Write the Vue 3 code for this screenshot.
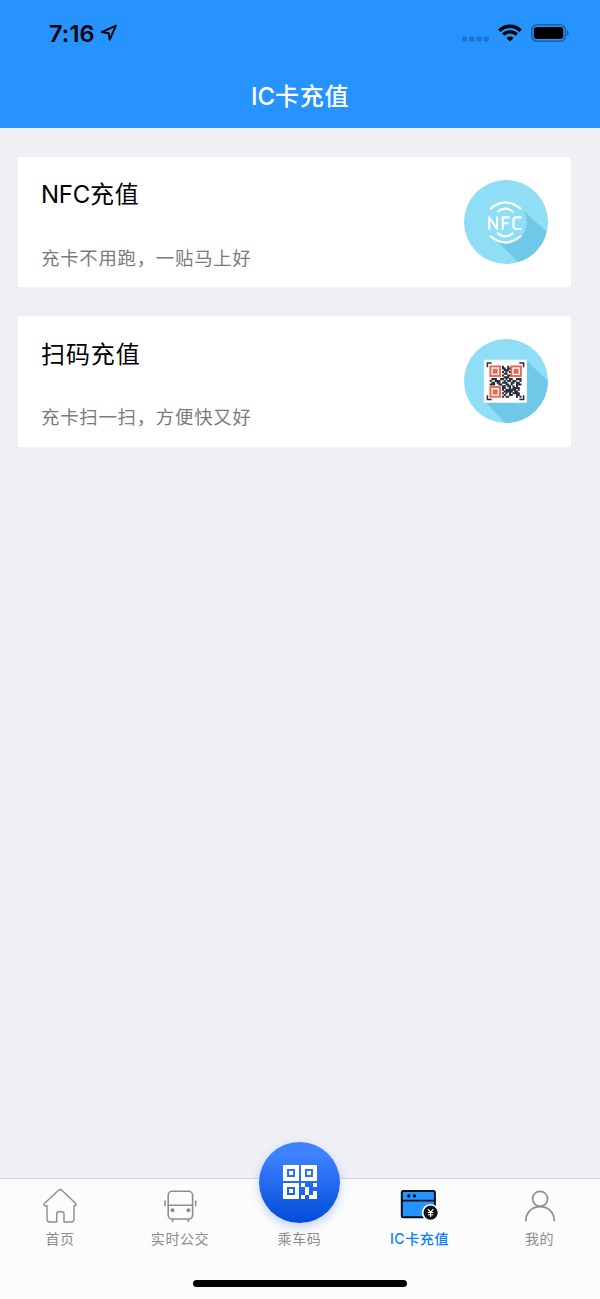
<script setup>
const cards = [
  { id: 'nfc', latin: 'NFC', title: '充值', note: '充卡不用跑，一贴马上好' },
  { id: 'scan', latin: '', title: '扫码充值', note: '充卡扫一扫，方便快又好' }
]

const tabs = [
  { id: 'home', latin: '', label: '首页' },
  { id: 'bus', latin: '', label: '实时公交' },
  { id: 'code', latin: '', label: '乘车码' },
  { id: 'card', latin: 'IC', label: '卡充值', active: true },
  { id: 'me', latin: '', label: '我的' }
]

const rows = [
  '.......#..#.......',
  '.......##.##......',
  '........###.......',
  '.......#.#.#......',
  '........##........',
  '.......#..##......',
  '........###.......',
  '.###..##.#.##..###',
  '#..###..#.##.##..#',
  '.##.##.###..##.##.',
  '###..##..##.#..###',
  '.......##.##.#.#..',
  '.......##..#.####.',
  '.......#.######.#.',
  '........#####.##..',
  '.......#.#.#.####.',
  '........#..##..##.',
  '.......#.##....#.#'
]
const modules = rows
  .flatMap((row, y) => [...row].map((c, x) => (c === '#' ? `M${x} ${y}h1.15v1.15h-1.15z` : '')))
  .join('')
</script>

<template>
  <div class="screen">
    <header class="header">
      <div class="status">
        <span class="clock">7:16</span>
        <svg class="arrow" viewBox="0 0 18 18"><path d="M1.7 8.1 15.9 1.6 9.7 15.7 8.7 9.3Z" fill="none" stroke="#000" stroke-width="1.9" stroke-linejoin="round" /></svg>
        <svg class="dots" viewBox="0 0 28 6" fill="#1c73c9"><rect x="0" y=".5" width="5.4" height="5" rx="1.8" /><rect x="7.2" y=".5" width="5.4" height="5" rx="1.8" /><rect x="14.4" y=".5" width="5.4" height="5" rx="1.8" /><rect x="21.6" y=".5" width="5.4" height="5" rx="1.8" /></svg>
        <svg class="wifi" viewBox="0 0 24 18"><g fill="none" stroke="#000" stroke-width="3.4"><path d="M1.4 6.7a15 15 0 0 1 21.2 0" /><path d="M5.3 10.6a9.5 9.5 0 0 1 13.4 0" /></g><path d="M8.4 14a5.2 5.2 0 0 1 7.2 0L12 17.6Z" /></svg>
        <svg class="battery" viewBox="0 0 38 18"><rect x=".8" y=".8" width="33.4" height="16.4" rx="4.8" fill="none" stroke="#17569a" stroke-width="1.3" /><rect x="2.8" y="2.9" width="29.4" height="12.2" rx="3" /><path d="M35.8 6v6c2.3-1.1 2.3-4.9 0-6z" fill="#17569a" /></svg>
      </div>
      <h1 class="heading"><span class="latin">IC</span>卡充值</h1>
    </header>

    <main class="cards">
      <section v-for="card in cards" :key="card.id" class="card">
        <div class="copy">
          <h2 class="title"><span v-if="card.latin" class="latin">{{ card.latin }}</span>{{ card.title }}</h2>
          <p class="note">{{ card.note }}</p>
        </div>
        <svg v-if="card.id === 'nfc'" class="badge" viewBox="0 0 84 84">
          <clipPath id="nfc-disc"><circle cx="42" cy="42" r="42" /></clipPath>
          <circle cx="42" cy="42" r="42" fill="#90def5" />
          <g clip-path="url(#nfc-disc)">
            <path d="M56.7 28 96 64.5V100H72L29.2 57.5Z" fill="#70c8e9" />
            <circle cx="41.4" cy="42.3" r="21.4" fill="#90def5" />
          </g>
          <g fill="none" stroke="#fff" stroke-width="2.1" stroke-linecap="round" stroke-linejoin="round" transform="translate(-.8 0)">
            <path d="M27.5 28.6q14.8-12.4 29.8 0M34.8 31.5q7.3-5.8 14.6 0M27.5 56.3q14.8 12.4 29.8 0M34.8 53.4q7.3 5.8 14.6 0" />
            <path d="M26 49V37.4L33.8 49V37.4M45.6 37.4h-6.1V49M39.5 43.2h5.1M57.6 37.4h-4.4q-2.9 0-2.9 2.9v5.8q0 2.9 2.9 2.9h4.4" />
          </g>
        </svg>
        <svg v-else class="badge" viewBox="0 0 84 84">
          <clipPath id="scan-disc"><circle cx="42" cy="42" r="42" /></clipPath>
          <circle cx="42" cy="42" r="42" fill="#90def5" />
          <path d="M62.4 21.5 90 48V100H56L21 62.5Z" fill="#70c8e9" clip-path="url(#scan-disc)" />
          <g transform="translate(-.7 .5)">
            <rect x="20.6" y="20.3" width="43" height="43" rx="1" fill="#fff" />
            <path d="M24.1 27.8V23.5h4.3M56 23.5h4.3v4.3M24.1 55.8v4.3h4.3M56 60.1h4.3v-4.3" fill="none" stroke="#29303d" stroke-width="1.5" />
            <path :d="modules" fill="#29303d" transform="translate(26.3 26.3) scale(1.76)" />
            <g fill="#fff" stroke="#f3624c" stroke-width="1.9">
              <rect x="27.1" y="26.9" width="9.6" height="9.6" /><rect x="48" y="26.9" width="9.6" height="9.6" /><rect x="27.1" y="47.6" width="9.6" height="9.6" />
            </g>
            <path d="M29.4 29.2h5v5h-5zM50.3 29.2h5v5h-5zM29.4 49.9h5v5h-5z" fill="#f3624c" />
          </g>
        </svg>
      </section>
    </main>

    <nav class="tabs">
      <div v-for="tab in tabs" :key="tab.id" class="tab" :class="{ active: tab.active }">
        <svg v-if="tab.id === 'home'" class="icon" viewBox="0 0 40 36" fill="none" stroke="#8e8e92" stroke-width="1.4" stroke-linejoin="round"><path d="M7 17.7H5.3C3.8 17.7 3.3 16.4 4.4 15.4L18.8 2.1q1.4-1.1 2.8 0L35.7 15.4c1 1 .6 2.3-1 2.3H34V31q0 3-3 3H24V26q0-2.2-2.2-2.2h-3Q16.7 23.8 16.7 26v8H9.8Q7 34 7 31Z" /></svg>
        <svg v-else-if="tab.id === 'bus'" class="icon" viewBox="0 0 40 36" fill="none" stroke="#8e8e92" stroke-width="1.6"><rect x="8.2" y="3.3" width="24.4" height="27.7" rx="4" /><path d="M8.2 17.2h24.4M5.1 12.6v5.6M35.7 12.6v5.6M12.5 31v3M28.3 31v3" /><circle cx="12.5" cy="22.2" r="2" fill="#8e8e92" stroke="none" /><circle cx="28.4" cy="22.2" r="2" fill="#8e8e92" stroke="none" /></svg>
        <div v-else-if="tab.id === 'code'" class="icon">
          <div class="orb">
            <svg class="qr" viewBox="0 0 34 34" fill="#fff" fill-rule="evenodd"><path d="M0 0h16v16H0zM4 4v8h8V4zM6 6h4v4H6zM18 0h16v16H18zM22 4v8h8V4zM24 6h4v4h-4zM0 18h16v16H0zM4 22v8h8v-8zM6 24h4v4H6zM18 18h4v4h-4zM30 18h4v4h-4zM22 22h4v8h-4zM18 30h4v4h-4zM26 30h4v-4h4v8h-8z" /></svg>
          </div>
        </div>
        <svg v-else-if="tab.id === 'card'" class="icon" viewBox="0 0 40 36"><g transform="translate(-.4 0)"><rect x="2.2" y="3" width="33.1" height="26.2" rx="1.3" fill="#2693ff" stroke="#0c1015" stroke-width="2" /><path d="M2.2 12.6h33.1" stroke="#0c1015" stroke-width="1.8" /><circle cx="9.2" cy="7.9" r="1.6" /><circle cx="14.8" cy="7.9" r="1.6" /><circle cx="31" cy="24.7" r="8.8" fill="#fcfcfc" /><circle cx="31" cy="24.7" r="7.1" fill="#111" /><path d="m28.4 21.2 2.6 3.1 2.6-3.1M31 24.3v4.6M28.3 24.5h5.4M28.3 26.8h5.4" fill="none" stroke="#fff" stroke-width="1.1" /></g></svg>
        <svg v-else class="icon" viewBox="0 0 40 36" fill="none" stroke="#8e8e92" stroke-width="1.7"><circle cx="20.1" cy="10.8" r="7.5" /><path d="M5.8 33.2C5.8 24.4 11.8 18.6 20.1 18.6S34.3 24.4 34.3 33.2" /></svg>
        <span class="label"><span v-if="tab.latin" class="latin">{{ tab.latin }}</span>{{ tab.label }}</span>
      </div>
      <div class="indicator"></div>
    </nav>
  </div>
</template>

<style>
body {
  margin: 0;
}
</style>

<style scoped>
.screen {
  display: flex;
  flex-direction: column;
  width: 600px;
  height: 1299px;
  background: #eff0f3;
  font-family: Inter, "Noto Sans CJK SC", sans-serif;
  overflow: hidden;
}
svg {
  display: block;
}
.header {
  flex: none;
  height: 127.5px;
  background: #2693ff;
}
.status {
  display: flex;
  align-items: center;
  height: 66px;
  padding-left: 49px;
}
.clock {
  width: 46px;
  font-size: 23.5px;
  font-weight: 600;
  letter-spacing: 0.1px;
  white-space: nowrap;
}
.arrow {
  width: 18px;
  height: 18px;
  margin-left: 5px;
}
.dots {
  width: 28px;
  height: 6px;
  margin: 12px 0 0 344px;
}
.wifi {
  width: 24px;
  height: 18px;
  margin-left: 8px;
}
.battery {
  width: 38px;
  height: 18px;
  margin-left: 8.5px;
}
.heading {
  margin: 0;
  text-align: center;
  color: #fff;
  font-size: 24px;
  line-height: 62px;
  font-weight: 500;
  letter-spacing: 0.7px;
}
.heading .latin {
  letter-spacing: 0;
}
.cards {
  flex: 1;
  display: flex;
  flex-direction: column;
  gap: 29px;
  padding: 29px 29px 0 17.5px;
}
.card {
  display: flex;
  justify-content: space-between;
  align-items: center;
  height: 130.5px;
  padding: 0 23.5px;
  background: #fff;
}
.copy {
  display: flex;
  flex-direction: column;
  justify-content: space-between;
  height: 95.5px;
  padding-top: 2.5px;
}
.title,
.note {
  margin: 0;
  font-weight: 400;
  white-space: nowrap;
}
.title {
  color: #000;
  font-size: 24px;
  line-height: 40px;
  letter-spacing: 0.9px;
}
.title .latin {
  letter-spacing: -0.3px;
}
.note {
  color: #7b7b7b;
  font-size: 18.4px;
  line-height: 26px;
  letter-spacing: 0.75px;
}
.badge {
  width: 84px;
  height: 84px;
}
.tabs {
  flex: none;
  display: grid;
  grid-template-columns: repeat(5, 1fr);
  grid-template-rows: 101px 8px;
  height: 120px;
  border-top: 1px solid #d5d6d7;
  background: #fcfcfc;
}
.tab {
  display: flex;
  flex-direction: column;
  align-items: center;
  padding: 9px 1px 0 0;
  color: #8c8c8c;
}
.tab:nth-child(-n + 2) {
  padding-right: 0;
}
.icon {
  width: 40px;
  height: 36px;
}
.orb {
  position: relative;
  left: -21px;
  top: -46px;
  display: flex;
  justify-content: center;
  align-items: center;
  width: 81px;
  height: 81px;
  border-radius: 50%;
  background: linear-gradient(#3f82ff 15%, #004bda);
  box-shadow: 0 4px 10px rgba(40, 95, 220, 0.28);
}
.qr {
  width: 34px;
  height: 34px;
  margin: 0 0 1.5px 1px;
}
.label {
  margin-top: 4px;
  font-size: 14px;
  line-height: 22px;
  font-weight: 400;
  letter-spacing: 0.6px;
  white-space: nowrap;
}
.active {
  color: #087fff;
}
.active .label {
  font-weight: 500;
}
.indicator {
  grid-column: 1 / -1;
  justify-self: center;
  width: 214px;
  height: 7px;
  border-radius: 4px;
  background: #000;
}
</style>
